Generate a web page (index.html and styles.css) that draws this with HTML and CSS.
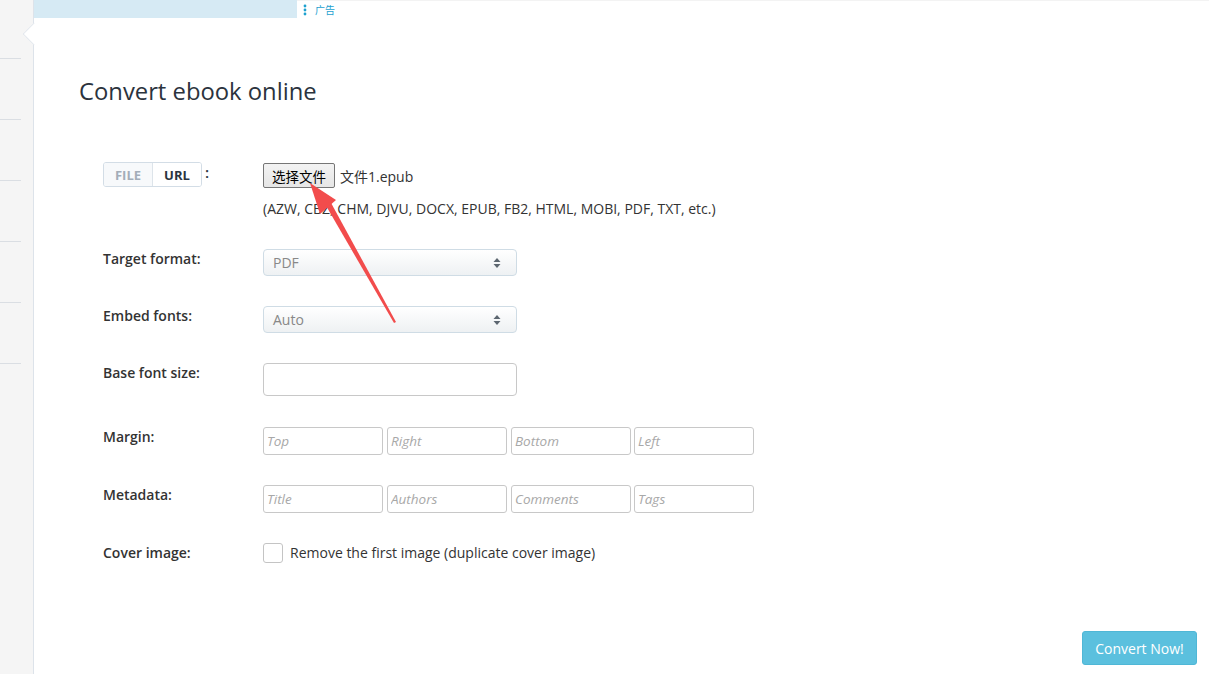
FILE: index.html
```html
<!DOCTYPE html>
<html>
<head>
<meta charset="utf-8">
<link rel="stylesheet" href="styles.css">
</head>
<body>
<div class="page">
  <aside class="sidebar">
    <div class="side-item"></div>
    <div class="side-item"></div>
    <div class="side-item"></div>
    <div class="side-item"></div>
    <div class="side-item"></div>
    <div class="side-item"></div>
  </aside>
  <main class="main">
    <span class="notch"></span>
    <div class="adbar">
      <div class="ad-block"></div>
      <div class="ad-mark">
        <svg class="ad-dots" width="4" height="12" viewBox="0 0 4 12"><circle cx="2" cy="2" r="1.4"/><circle cx="2" cy="6" r="1.4"/><circle cx="2" cy="10" r="1.4"/></svg>
        <span class="ad-text">广告</span>
      </div>
    </div>
    <h1 class="title">Convert ebook online</h1>
    <div class="form">
      <div class="row row-file">
        <div class="label">
          <div class="toggle"><span class="tg tg-off">FILE</span><span class="tg tg-on">URL</span></div>
          <span class="colon">:</span>
        </div>
        <div class="field">
          <div class="file-line">
            <button class="file-btn">选择文件</button>
            <span class="file-name">文件1.epub</span>
          </div>
          <div class="formats">(AZW, CBZ, CHM, DJVU, DOCX, EPUB, FB2, HTML, MOBI, PDF, TXT, etc.)</div>
        </div>
      </div>
      <div class="row">
        <div class="label">Target format:</div>
        <div class="field">
          <div class="select"><span>PDF</span>
            <svg width="8" height="12" viewBox="0 0 8 12"><path d="M4 1 L7.5 5 L0.5 5 Z M4 11 L7.5 7 L0.5 7 Z"/></svg>
          </div>
        </div>
      </div>
      <div class="row">
        <div class="label">Embed fonts:</div>
        <div class="field">
          <div class="select"><span>Auto</span>
            <svg width="8" height="12" viewBox="0 0 8 12"><path d="M4 1 L7.5 5 L0.5 5 Z M4 11 L7.5 7 L0.5 7 Z"/></svg>
          </div>
        </div>
      </div>
      <div class="row row-base">
        <div class="label">Base font size:</div>
        <div class="field"><input class="text-input" type="text"></div>
      </div>
      <div class="row">
        <div class="label">Margin:</div>
        <div class="field quad">
          <input class="small-input" placeholder="Top">
          <input class="small-input" placeholder="Right">
          <input class="small-input" placeholder="Bottom">
          <input class="small-input" placeholder="Left">
        </div>
      </div>
      <div class="row">
        <div class="label">Metadata:</div>
        <div class="field quad">
          <input class="small-input" placeholder="Title">
          <input class="small-input" placeholder="Authors">
          <input class="small-input" placeholder="Comments">
          <input class="small-input" placeholder="Tags">
        </div>
      </div>
      <div class="row">
        <div class="label">Cover image:</div>
        <div class="field check-line">
          <span class="checkbox"></span>
          <span>Remove the first image (duplicate cover image)</span>
        </div>
      </div>
    </div>
    <div class="actions">
      <button class="convert">Convert Now!</button>
    </div>
  </main>
  <svg class="annot" width="1209" height="674" viewBox="0 0 1209 674">
    <polygon points="310,183 336,200 320,214" fill="#f24c4c"/>
    <polygon points="325,204 330,201 396,322 394,323" fill="#f24c4c"/>
  </svg>
</div>
</body>
</html>
```

FILE: styles.css
```css
* { box-sizing: border-box; }
html, body { margin: 0; padding: 0; }
body {
  font-family: "Open Sans", "Noto Sans CJK SC", sans-serif;
  font-size: 14px;
  color: #333;
  background: #fff;
}
.page {
  position: relative;
  display: flex;
  width: 1209px;
  height: 674px;
  overflow: hidden;
}
.sidebar {
  width: 34px;
  flex: none;
  background: #f5f5f5;
  border-right: 1px solid #dde3ea;
  padding-top: 58px;
}
.side-item {
  width: 21px;
  height: 61px;
  border-top: 1px solid #dadee3;
}
.main {
  position: relative;
  flex: 1;
  display: flex;
  flex-direction: column;
  border-top: 1px solid #f3f3f3;
}
.notch {
  position: absolute;
  left: -11px;
  top: 22px;
  width: 22px;
  height: 22px;
  background: #fff;
  border-left: 1px solid #dde3ea;
  border-bottom: 1px solid #dde3ea;
  transform: rotate(45deg) scale(0.72, 0.72);
}
.adbar {
  display: flex;
  align-items: flex-start;
  height: 18px;
  margin-top: -1px;
}
.ad-block {
  width: 263px;
  height: 18px;
  background: #d6eaf4;
}
.ad-mark {
  display: flex;
  align-items: center;
  gap: 8px;
  padding-left: 6px;
  height: 20px;
  color: #1da1cf;
}
.ad-dots { fill: #1da1cf; }
.ad-text {
  font-size: 10px;
  font-family: "Noto Sans CJK SC", sans-serif;
  line-height: 12px;
}
.title {
  margin: 58px 0 0 45px;
  font-size: 23.8px;
  font-weight: 400;
  color: #2b333d;
  line-height: 30px;
}
.form {
  margin: 56px 0 0 69px;
}
.row {
  display: flex;
  align-items: flex-start;
  margin-bottom: 30px;
}
.row-base { margin-bottom: 31px; }
.label {
  width: 160px;
  flex: none;
  font-weight: 600;
  line-height: 20px;
  color: #333;
}
.row-file .label {
  display: flex;
  align-items: flex-start;
}
.toggle {
  display: flex;
  height: 25px;
  border: 1px solid #d3dde6;
  border-radius: 3px;
  overflow: hidden;
  font-size: 13px;
  font-weight: 700;
}
.tg {
  display: flex;
  align-items: center;
  justify-content: center;
  height: 23px;
}
.tg-off {
  width: 49px;
  color: #a3adb8;
  background: #f7f9fb;
  border-right: 1px solid #dde4ea;
}
.tg-on {
  width: 48px;
  color: #2a3440;
  background: #fff;
}
.colon {
  margin-left: 3px;
  line-height: 20px;
  font-size: 15px;
  color: #2a3440;
}
.field {
  display: flex;
  flex-direction: column;
}
.file-line {
  display: flex;
  align-items: center;
  margin-top: 1px;
}
.file-btn {
  height: 25px;
  width: 72px;
  padding: 0;
  font-family: "Noto Sans CJK SC", sans-serif;
  font-size: 13.5px;
  color: #000;
  background: linear-gradient(#f3f3f3, #e6e6e6);
  border: 1px solid #767676;
  border-radius: 2px;
}
.file-name {
  margin-left: 5px;
  color: #333;
}
.formats {
  margin-top: 11px;
  line-height: 20px;
  font-size: 14px;
  color: #333;
}
.select {
  width: 254px;
  height: 27px;
  display: flex;
  align-items: center;
  justify-content: space-between;
  padding: 0 15px 0 9px;
  border: 1px solid #cfdce5;
  border-radius: 4px;
  background: linear-gradient(#ffffff, #eef1f3);
  color: #888;
  font-size: 14px;
}
.select svg { fill: #5c6670; }
.text-input {
  width: 254px;
  height: 33px;
  border: 1px solid #c8c8c8;
  border-radius: 4px;
  font: inherit;
  padding: 0 6px;
  margin: 0;
}
.quad {
  flex-direction: row;
  gap: 4px;
}
.small-input {
  width: 120px;
  height: 28px;
  margin: 0;
  border: 1px solid #c8c8c8;
  border-radius: 3px;
  padding: 0 3px;
  font-family: "Open Sans", sans-serif;
  font-size: 13.5px;
  font-style: italic;
}
.small-input:nth-child(4) { margin-left: -1px; }
.small-input::placeholder {
  color: #a8a8a8;
  font-style: italic;
}
.check-line {
  flex-direction: row;
  align-items: center;
  gap: 7px;
  line-height: 20px;
}
.checkbox {
  width: 20px;
  height: 20px;
  border: 1px solid #c4c4c4;
  border-radius: 3px;
  background: #fff;
}
.actions {
  margin-top: auto;
  display: flex;
  justify-content: flex-end;
  padding: 0 12px 9px 0;
}
.convert {
  width: 115px;
  height: 34px;
  border: 1px solid #4fb7d6;
  border-radius: 3px;
  background: #5bc0de;
  color: #fff;
  font-family: "Open Sans", sans-serif;
  font-size: 14px;
  padding: 0;
}
.annot {
  position: absolute;
  left: 0;
  top: 0;
  pointer-events: none;
}
```
